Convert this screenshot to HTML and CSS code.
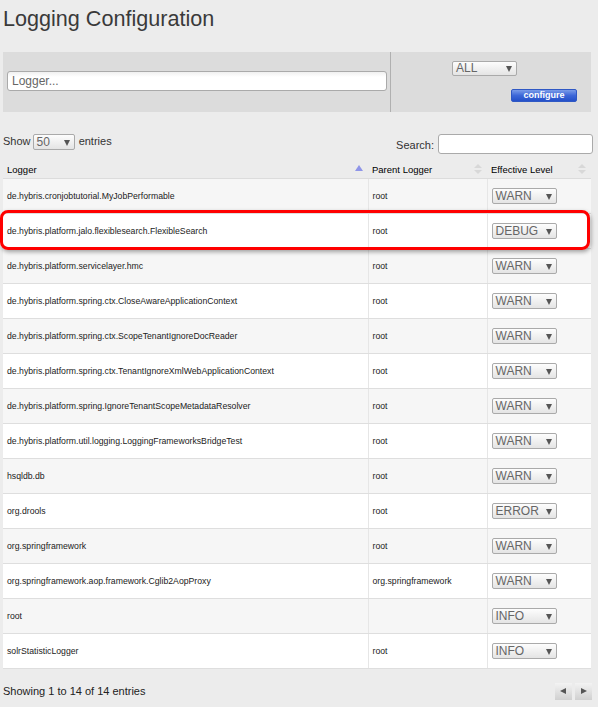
FILE: index.html
```html
<!DOCTYPE html>
<html lang="en">
<head>
  <meta charset="UTF-8">
  <title>Logging Configuration</title>
  <link rel="stylesheet" href="styles.css">
</head>
<body>
  <div class="page">
    <h1>Logging Configuration</h1>

    <div class="panel">
      <div class="panel-left">
        <input type="text" class="logger-input" placeholder="Logger...">
      </div>
      <div class="panel-right">
        <span class="sel sel-all">ALL</span>
        <button class="configure">configure</button>
      </div>
    </div>

    <div class="controls">
      <div class="length">Show <span class="sel sel-len">50</span> entries</div>
      <div class="filter">Search: <input type="text" class="search-input"></div>
    </div>

    <div class="table-wrap">
      <table class="loggers">
        <thead>
          <tr>
            <th class="col-logger">Logger <span class="sort-up"></span></th>
            <th class="col-parent">Parent Logger <span class="sort-both"></span></th>
            <th class="col-level">Effective Level <span class="sort-both"></span></th>
          </tr>
        </thead>
        <tbody>
          <tr><td>de.hybris.cronjobtutorial.MyJobPerformable</td><td>root</td><td><span class="sel">WARN</span></td></tr>
          <tr><td>de.hybris.platform.jalo.flexiblesearch.FlexibleSearch</td><td>root</td><td><span class="sel">DEBUG</span></td></tr>
          <tr><td>de.hybris.platform.servicelayer.hmc</td><td>root</td><td><span class="sel">WARN</span></td></tr>
          <tr><td>de.hybris.platform.spring.ctx.CloseAwareApplicationContext</td><td>root</td><td><span class="sel">WARN</span></td></tr>
          <tr><td>de.hybris.platform.spring.ctx.ScopeTenantIgnoreDocReader</td><td>root</td><td><span class="sel">WARN</span></td></tr>
          <tr><td>de.hybris.platform.spring.ctx.TenantIgnoreXmlWebApplicationContext</td><td>root</td><td><span class="sel">WARN</span></td></tr>
          <tr><td>de.hybris.platform.spring.IgnoreTenantScopeMetadataResolver</td><td>root</td><td><span class="sel">WARN</span></td></tr>
          <tr><td>de.hybris.platform.util.logging.LoggingFrameworksBridgeTest</td><td>root</td><td><span class="sel">WARN</span></td></tr>
          <tr><td>hsqldb.db</td><td>root</td><td><span class="sel">WARN</span></td></tr>
          <tr><td>org.drools</td><td>root</td><td><span class="sel">ERROR</span></td></tr>
          <tr><td>org.springframework</td><td>root</td><td><span class="sel">WARN</span></td></tr>
          <tr><td>org.springframework.aop.framework.Cglib2AopProxy</td><td>org.springframework</td><td><span class="sel">WARN</span></td></tr>
          <tr><td>root</td><td></td><td><span class="sel">INFO</span></td></tr>
          <tr><td>solrStatisticLogger</td><td>root</td><td><span class="sel">INFO</span></td></tr>
        </tbody>
      </table>
      <div class="highlight"></div>
    </div>

    <div class="footer">
      <div class="info">Showing 1 to 14 of 14 entries</div>
      <div class="paging">
        <span class="page-btn prev"></span>
        <span class="page-btn next"></span>
      </div>
    </div>
  </div>
</body>
</html>
```

FILE: styles.css
```css
body {
  margin: 0;
  background-color: #ececec;
  font-family: "Liberation Sans", Arial, sans-serif;
  color: #333;
}
.page {
  padding: 0 7px 0 3px;
}
h1 {
  margin: 0;
  padding-top: 7px;
  height: 45px;
  font-size: 21.6px;
  line-height: 24px;
  font-weight: normal;
  color: #3a3a3a;
}

/* top panel */
.panel {
  display: grid;
  grid-template-columns: 388px 1fr;
  height: 60px;
  background-color: #dcdcdc;
}
.panel-left {
  padding: 19px 0 0 4px;
  border-right: 1px solid #b0b0b0;
}
.logger-input {
  width: 380px;
  height: 20px;
  box-sizing: border-box;
  border: 1px solid #aaa;
  border-radius: 3px;
  padding: 0 4px;
  font-family: inherit;
  font-size: 12px;
  background: linear-gradient(#f0f0f0, #fff 5px);
}
.logger-input::placeholder {
  color: #666;
}
.panel-right {
  padding: 9px 0 0 61px;
  display: flex;
  flex-direction: column;
  align-items: flex-start;
}
.configure {
  margin: 13px 0 0 59px;
  width: 66px;
  height: 13px;
  padding: 0;
  border: 1px solid #2f58c4;
  border-radius: 2px;
  background: linear-gradient(#7a9be8, #3d67d8 50%, #2450c8);
  color: #fff;
  font-family: inherit;
  font-size: 9px;
  font-weight: bold;
  line-height: 11px;
}

/* fake select boxes */
.sel {
  position: relative;
  display: inline-block;
  box-sizing: border-box;
  width: 65px;
  height: 16px;
  padding-left: 3px;
  border: 1px solid #aaa;
  border-radius: 2px;
  background: linear-gradient(#fdfdfd, #e4e4e4);
  color: #666;
  font-size: 12px;
  line-height: 14px;
  vertical-align: middle;
}
.sel::after {
  content: "";
  position: absolute;
  right: 4px;
  top: 5px;
  border-left: 3px solid transparent;
  border-right: 3px solid transparent;
  border-top: 6px solid #555;
}
.sel-all {
  height: 15px;
  line-height: 13px;
}
.sel-all::after {
  top: 4px;
}
.sel-len {
  width: 42px;
  margin: 0 1px 0 -1px;
}

/* table controls */
.controls {
  display: flex;
  justify-content: space-between;
  margin-top: 21px;
  height: 27px;
  align-items: flex-start;
  font-size: 11px;
}
.length {
  padding-top: 1px;
}
.filter {
  margin-right: -2px;
  display: flex;
  align-items: center;
  gap: 4px;
  padding-top: 3px;
}
.search-input {
  width: 155px;
  height: 20px;
  box-sizing: border-box;
  border: 1px solid #aaa;
  border-radius: 3px;
  margin-top: -2px;
}

/* table */
.table-wrap {
  position: relative;
}
.loggers {
  width: 100%;
  border-collapse: collapse;
  table-layout: fixed;
  font-size: 8.7px;
}
.loggers th {
  position: relative;
  height: 18px;
  padding: 0 4px;
  text-align: left;
  font-weight: normal;
  font-size: 9.5px;
  color: #000;
  border-bottom: 1px solid #dcdcdc;
}
.col-logger { width: 357px; }
.col-parent { width: 111px; }
.loggers td {
  height: 34px;
  padding: 0 4px;
  color: #222;
  border-bottom: 1px solid #dedede;
  border-left: 1px solid #e6e6e6;
}
.loggers td:first-child {
  border-left: none;
}
.loggers td:last-child {
  padding-left: 4px;
}
.loggers tbody tr:nth-child(odd) {
  background-color: #f6f6f6;
}
.loggers tbody tr:nth-child(even) {
  background-color: #fff;
}
.sort-up {
  position: absolute;
  right: 5px;
  top: 5px;
  border: 4px solid transparent;
  border-bottom: 6px solid #8f95e8;
  border-top: none;
}
.sort-both {
  position: absolute;
  right: 5px;
  top: 4px;
  border: 4px solid transparent;
  border-bottom: 4px solid #d8d8d8;
  border-top: none;
}
.sort-both::after {
  content: "";
  position: absolute;
  left: -4px;
  top: 6px;
  border: 4px solid transparent;
  border-top: 4px solid #d8d8d8;
  border-bottom: none;
}

/* red marker round the FlexibleSearch row */
.highlight {
  position: absolute;
  left: -3px;
  top: 50px;
  width: 584px;
  height: 34px;
  border: 3px solid #f00;
  border-radius: 8px;
  box-shadow: 1px 2px 4px rgba(0, 0, 0, 0.35);
}

/* footer */
.footer {
  display: flex;
  justify-content: space-between;
  align-items: center;
  height: 45px;
  font-size: 11px;
  color: #222;
}
.info {
  margin-top: -1px;
}
.paging {
  display: flex;
  gap: 3px;
  margin-right: -1px;
}
.page-btn {
  position: relative;
  width: 17px;
  height: 17px;
  background: linear-gradient(#f3f3f3, #d0d0d0);
}
.page-btn::after {
  content: "";
  position: absolute;
  top: 5px;
  border-top: 3px solid transparent;
  border-bottom: 3px solid transparent;
}
.prev::after {
  left: 5px;
  border-right: 6px solid #555;
}
.next::after {
  left: 6px;
  border-left: 6px solid #555;
}
```
